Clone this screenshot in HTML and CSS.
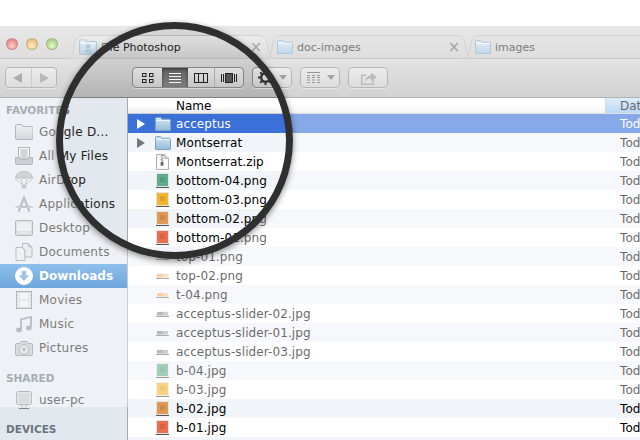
FILE: index.html
```html
<!DOCTYPE html>
<html lang="en">
<head>
<meta charset="utf-8">
<title>Finder</title>
<link rel="stylesheet" href="styles.css">
</head>
<body>
<svg class="defs" width="0" height="0" aria-hidden="true">
  <defs>
    <linearGradient id="fg" x1="0" y1="0" x2="0" y2="1"><stop offset="0" stop-color="#d3e5f3"/><stop offset="1" stop-color="#94bcd9"/></linearGradient>
    <linearGradient id="sg" x1="0" y1="0" x2="0" y2="1"><stop offset="0" stop-color="#e2e4e8"/><stop offset="1" stop-color="#b9bdc4"/></linearGradient>
    <linearGradient id="tabg" x1="0" y1="0" x2="0" y2="1"><stop offset="0" stop-color="#e0e0e0"/><stop offset="1" stop-color="#c6c6c6"/></linearGradient>
    <symbol id="folder" viewBox="0 0 16 14"><path d="M.5 13V1.600C.5 1 1 .5 1.600.5h3.600c.6 0 .9.3 1.200.8l.5.9h7.500c.6 0 1.100.5 1.100 1.100V13c0 .3-.2.5-.5.5H1c-.3 0-.5-.2-.5-.5z" fill="url(#fg)" stroke="#7ba3c0"/><path d="M1 3.500h14" stroke="#eef6fb"/></symbol>
    <symbol id="zip" viewBox="0 0 14 17"><path d="M.5 .5h9l4 4v12H.5z" fill="#fbfbfb" stroke="#a5a5a5"/><path d="M9.500 .5v4h4" fill="#ddd" stroke="#a5a5a5"/><path d="M6 1h2v1H6zM5 2.500h2v1H5zM6 4h2v1H6zM5 5.500h2v1H5zM6 7h2v1H6z" fill="#777"/><rect x="5" y="8.500" width="3" height="4" rx=".6" fill="#666"/></symbol>
    <symbol id="thumb" viewBox="0 0 13 15"><rect width="13" height="14" fill="#fff"/><rect x=".5" y=".5" width="12" height="13" fill="currentColor" stroke="#e4e4e4"/><rect x="4" y="4" width="5" height="5" fill="#000" opacity=".1"/><path d="M0 14.500h13" stroke="#555"/></symbol>
    <symbol id="strip" viewBox="0 0 13 6"><rect width="13" height="5" fill="#f4f4f4"/><rect x="1" y="1" width="11" height="3.500" fill="currentColor"/><rect x="7" y="1" width="5" height="3.500" fill="#fff" opacity=".3"/><path d="M0 5.500h13" stroke="#777"/></symbol>
    <symbol id="s-folder" viewBox="0 0 18 16"><path d="M.5 14.500V2c0-.8.5-1.500 1.300-1.500h4.400c.7 0 1 .4 1.300 1l.4 1h8.800c.6 0 1.300.6 1.300 1.300v10.700c0 .6-.4 1-1 1H1.500c-.6 0-1-.4-1-1z" fill="url(#sg)" stroke="#7f858c"/></symbol>
    <symbol id="s-files" viewBox="0 0 18 18"><rect x="3.500" y=".5" width="11" height="10.500" fill="#eceef1" stroke="#7f858c"/><path d="M5.500 3h7M5.500 5h7M5.500 7h7M5.500 9h7" stroke="#7f858c"/><path d="M.5 10.500h4l1 2h7l1-2h4v6c0 .6-.4 1-1 1h-15c-.6 0-1-.4-1-1z" fill="#a9aeb5" stroke="#7f858c"/></symbol>
    <symbol id="s-air" viewBox="0 0 18 18"><path d="M.5 7.500C1 3 4.500.5 9 .5s8 2.500 8.500 7c-1-1-2.500-1-3.500 0-1-1-3-1-5 0-2-1-4-1-5 0-1-1-2.500-1-3.500 0z" fill="#b4b8be" stroke="#8a9096"/><path d="M1 8l6.500 6M17 8l-6.500 6M6 8l1.800 6M12 8l-1.800 6" stroke="#8a9096" stroke-width=".8"/><rect x="6.800" y="14" width="4.400" height="3.500" fill="#a0a5ab"/></symbol>
    <symbol id="s-apps" viewBox="0 0 20 18"><path d="M10.500 .5L4 17.500M9.500 .5L16 17.500M3.500 12h13" stroke="#8d9298" stroke-width="2.200" fill="none"/><path d="M.5 12.500h6M13.500 12.500h6" stroke="#aab0b6" stroke-width="2"/></symbol>
    <symbol id="s-desk" viewBox="0 0 18 16"><rect x=".5" y=".5" width="17" height="15" rx="1" fill="#c6c9cf" stroke="#84898f"/><rect x="2" y="2" width="14" height="9" fill="#e4e6ea"/><path d="M5 12.500h1M7.500 12.500h1M10 12.500h1M12.500 12.500h1" stroke="#fff"/></symbol>
    <symbol id="s-docs" viewBox="0 0 17 18"><path d="M.5 4.500h6l3 3v10h-9z" fill="#e6e8ec" stroke="#8b9096"/><path d="M7 .5h6l3.500 3.500v10h-7V7L7 5z" fill="#dfe2e6" stroke="#8b9096"/><path d="M13 .5v3.500h3.500" fill="none" stroke="#8b9096"/></symbol>
    <symbol id="s-down" viewBox="0 0 18 18"><circle cx="9" cy="9" r="9" fill="#fff"/><path d="M6.800 4h4.400v4.500h3L9 14 3.800 8.500h3z" fill="#5b9bdb"/></symbol>
    <symbol id="s-movie" viewBox="0 0 16 18"><rect x=".5" y=".5" width="15" height="17" fill="#c7cad0" stroke="#84898f"/><rect x="3.500" y="2" width="9" height="6.500" fill="#eceef1"/><rect x="3.500" y="9.500" width="9" height="6.500" fill="#eceef1"/><path d="M2 2v14M14 2v14" stroke="#f2f3f5" stroke-width="1.500" stroke-dasharray="1.500 1.500"/></symbol>
    <symbol id="s-music" viewBox="0 0 16 17"><path d="M5 13V3.500L15 1v10" fill="none" stroke="#8b9096" stroke-width="1.800"/><ellipse cx="3" cy="14" rx="2.800" ry="2.400" fill="#8b9096"/><ellipse cx="12.800" cy="12" rx="2.800" ry="2.400" fill="#8b9096"/></symbol>
    <symbol id="s-cam" viewBox="0 0 18 15"><path d="M.5 4c0-.8.5-1.500 1.300-1.500h3L6 .5h6l1.200 2h3c.8 0 1.300.7 1.300 1.500v9.500c0 .6-.4 1-1 1h-15c-.6 0-1-.4-1-1z" fill="#bcc0c6" stroke="#84898f"/><circle cx="9" cy="8.500" r="4.500" fill="#e8eaed" stroke="#84898f"/><circle cx="9" cy="8.500" r="2.200" fill="#a0a5ab"/></symbol>
    <symbol id="s-pc" viewBox="0 0 16 18"><rect x=".5" y=".5" width="15" height="13" rx="2" fill="#d8dade" stroke="#84898f"/><path d="M2.500 3h11M2.500 5h11M2.500 7h11M2.500 9h11M2.500 11h11" stroke="#a5a9af"/><path d="M6 14v2M10 14v2M3 17.500h10" stroke="#84898f"/></symbol>
  </defs>
</svg>

<div class="window">
  <header class="tabbar">
    <div class="lights">
      <span class="light red"></span><span class="light amber"></span><span class="light green"></span>
    </div>
    <div class="tab active">
      <svg class="tab-shape" viewBox="0 0 210 24" width="210" height="24"><path d="M0 23.500C5 23.500 7 20 8 13 9 5 11 .5 18 .5H192C199 .5 201 5 202 13 203 20 205 23.500 210 23.500" fill="url(#tabg)" stroke="#b4b4b4"/></svg>
      <svg class="tab-icon" width="18" height="16" viewBox="0 0 16 14"><use href="#folder"/><circle cx="8" cy="6.500" r="2" fill="#7ba3c0"/><path d="M4.500 12c0-2.500 1.500-3 3.500-3s3.500.5 3.500 3z" fill="#7ba3c0"/></svg>
      <span class="tab-label">File Photoshop</span><span class="tab-x">×</span>
    </div>
    <div class="tab">
      <svg class="tab-shape" viewBox="0 0 210 24" width="210" height="24"><path d="M0 23.500C5 23.500 7 20 8 13 9 5 11 .5 18 .5H192C199 .5 201 5 202 13 203 20 205 23.500 210 23.500" fill="none" stroke="#b4b4b4"/></svg>
      <svg class="tab-icon" width="16" height="14"><use href="#folder"/></svg>
      <span class="tab-label">doc-images</span><span class="tab-x">×</span>
    </div>
    <div class="tab">
      <svg class="tab-shape" viewBox="0 0 210 24" width="210" height="24"><path d="M0 23.500C5 23.500 7 20 8 13 9 5 11 .5 18 .5H192C199 .5 201 5 202 13 203 20 205 23.500 210 23.500" fill="none" stroke="#b4b4b4"/></svg>
      <svg class="tab-icon" width="16" height="14"><use href="#folder"/></svg>
      <span class="tab-label">images</span>
    </div>
  </header>

  <nav class="toolbar">
    <div class="seg nav-seg">
      <span class="seg-item"><svg width="12" height="12" viewBox="0 0 12 12"><path d="M10 1v10L1 6z" fill="#777"/></svg></span>
      <span class="seg-item"><svg width="12" height="12" viewBox="0 0 12 12"><path d="M2 1v10l9-5z" fill="#8a8a8a"/></svg></span>
    </div>
    <div class="seg view-seg">
      <span class="seg-item"><svg width="14" height="12" viewBox="0 0 14 12" fill="none" stroke="#222"><rect x="1.500" y="1.500" width="3.500" height="3"/><rect x="8.500" y="1.500" width="3.500" height="3"/><rect x="1.500" y="7.500" width="3.500" height="3"/><rect x="8.500" y="7.500" width="3.500" height="3"/></svg></span>
      <span class="seg-item on"><svg width="14" height="12" viewBox="0 0 14 12" fill="none" stroke="#f4f4f4"><path d="M1 1.500h12M1 4.500h12M1 7.500h12M1 10.500h12"/></svg></span>
      <span class="seg-item"><svg width="14" height="12" viewBox="0 0 14 12" fill="none" stroke="#222"><rect x=".5" y="1.500" width="13" height="9"/><path d="M4.500 1.500v9M9.500 1.500v9"/></svg></span>
      <span class="seg-item"><svg width="16" height="12" viewBox="0 0 16 12" fill="none" stroke="#222"><path d="M.5 2v8M2.500 2v8M13.500 2v8M15.500 2v8"/><rect x="4.500" y="1.500" width="7" height="9" fill="#555"/></svg></span>
    </div>
    <div class="seg action-seg">
      <span class="seg-item"><svg width="15" height="15" viewBox="0 0 15 15"><circle cx="7.500" cy="7.500" r="4.300" fill="none" stroke="#333" stroke-width="2.400"/><path d="M7.500 0v3M7.500 12v3M0 7.500h3M12 7.500h3M2.200 2.200l2 2M10.800 10.800l2 2M2.200 12.800l2-2M10.800 4.200l2-2" stroke="#333" stroke-width="2"/></svg><svg class="caret" width="8" height="5" viewBox="0 0 8 5"><path d="M0 0h8L4 5z" fill="#666"/></svg></span>
    </div>
    <div class="seg arrange-seg">
      <span class="seg-item"><svg width="15" height="12" viewBox="0 0 15 12" fill="none" stroke="#555"><path d="M1 .5h13M1 3.500h3M6 3.500h3M11 3.500h3M1 5.500h3M6 5.500h3M11 5.500h3M1 8h3M6 8h3M11 8h3M1 10.500h3M6 10.500h3M11 10.500h3"/></svg><svg class="caret" width="8" height="5" viewBox="0 0 8 5"><path d="M0 0h8L4 5z" fill="#666"/></svg></span>
    </div>
    <div class="seg share-seg">
      <span class="seg-item"><svg width="17" height="14" viewBox="0 0 17 14"><path d="M1 3.500h5v1.500H2.500v7.500h10V9H14v5H1z" fill="#8f8f8f"/><path d="M5 10C5.500 6.500 8 4.500 11 4.500V1.500l6 4.500-6 4.500V7.500C8.500 7.500 6.500 8.300 5 10z" fill="#8f8f8f"/></svg></span>
    </div>
  </nav>

  <main class="body">
    <aside class="sidebar">
      <h2 class="side-head first">FAVORITES</h2>
      <div class="side-item"><svg class="si" height="16"><use href="#s-folder"/></svg>Google D...</div>
      <div class="side-item"><svg class="si" height="18"><use href="#s-files"/></svg>All My Files</div>
      <div class="side-item"><svg class="si" height="18"><use href="#s-air"/></svg>AirDrop</div>
      <div class="side-item"><svg class="si" height="18"><use href="#s-apps"/></svg>Applications</div>
      <div class="side-item"><svg class="si" height="16"><use href="#s-desk"/></svg>Desktop</div>
      <div class="side-item"><svg class="si" height="18"><use href="#s-docs"/></svg>Documents</div>
      <div class="side-item current"><svg class="si" height="18"><use href="#s-down"/></svg>Downloads</div>
      <div class="side-item"><svg class="si" height="18"><use href="#s-movie"/></svg>Movies</div>
      <div class="side-item"><svg class="si" height="17"><use href="#s-music"/></svg>Music</div>
      <div class="side-item"><svg class="si" height="15"><use href="#s-cam"/></svg>Pictures</div>
      <h2 class="side-head">SHARED</h2>
      <div class="side-item tight"><svg class="si" height="18"><use href="#s-pc"/></svg>user-pc</div>
      <h2 class="side-head last">DEVICES</h2>
    </aside>

    <section class="list">
      <div class="list-head"><span class="col-name">Name</span><span class="col-date">Dat</span></div>

      <div class="row selected"><span class="disc"><svg width="10" height="10" viewBox="0 0 10 10"><path d="M1 0l8 5-8 5z" fill="#fff"/></svg></span><svg class="fi" width="16" height="14"><use href="#folder"/></svg><span class="name">acceptus</span><span class="date">Tod</span></div>
      <div class="row"><span class="disc"><svg width="10" height="10" viewBox="0 0 10 10"><path d="M1 0l8 5-8 5z" fill="#777"/></svg></span><svg class="fi" width="16" height="14"><use href="#folder"/></svg><span class="name">Montserrat</span><span class="date">Tod</span></div>
      <div class="row"><span class="disc"></span><svg class="fi sm" width="13" height="16"><use href="#zip"/></svg><span class="name">Montserrat.zip</span><span class="date">Tod</span></div>
      <div class="row"><span class="disc"></span><svg class="fi sm c-green" width="13" height="15"><use href="#thumb"/></svg><span class="name">bottom-04.png</span><span class="date">Tod</span></div>
      <div class="row"><span class="disc"></span><svg class="fi sm c-yellow" width="13" height="15"><use href="#thumb"/></svg><span class="name">bottom-03.png</span><span class="date">Tod</span></div>
      <div class="row"><span class="disc"></span><svg class="fi sm c-orange" width="13" height="15"><use href="#thumb"/></svg><span class="name">bottom-02.png</span><span class="date">Tod</span></div>
      <div class="row"><span class="disc"></span><svg class="fi sm c-red" width="13" height="15"><use href="#thumb"/></svg><span class="name">bottom-01.png</span><span class="date">Tod</span></div>
      <div class="row"><span class="disc"></span><svg class="fi sm c-peach" width="13" height="6"><use href="#strip"/></svg><span class="name">top-01.png</span><span class="date">Tod</span></div>
      <div class="row"><span class="disc"></span><svg class="fi sm c-peach" width="13" height="6"><use href="#strip"/></svg><span class="name">top-02.png</span><span class="date">Tod</span></div>
      <div class="row"><span class="disc"></span><svg class="fi sm c-peach" width="13" height="6"><use href="#strip"/></svg><span class="name">t-04.png</span><span class="date">Tod</span></div>
      <div class="row"><span class="disc"></span><svg class="fi sm c-grey" width="13" height="6"><use href="#strip"/></svg><span class="name">acceptus-slider-02.jpg</span><span class="date">Tod</span></div>
      <div class="row"><span class="disc"></span><svg class="fi sm c-grey" width="13" height="6"><use href="#strip"/></svg><span class="name">acceptus-slider-01.jpg</span><span class="date">Tod</span></div>
      <div class="row"><span class="disc"></span><svg class="fi sm c-grey" width="13" height="6"><use href="#strip"/></svg><span class="name">acceptus-slider-03.jpg</span><span class="date">Tod</span></div>
      <div class="row"><span class="disc"></span><svg class="fi sm c-green" width="13" height="15"><use href="#thumb"/></svg><span class="name">b-04.jpg</span><span class="date">Tod</span></div>
      <div class="row"><span class="disc"></span><svg class="fi sm c-yellow" width="13" height="15"><use href="#thumb"/></svg><span class="name">b-03.jpg</span><span class="date">Tod</span></div>
      <div class="row"><span class="disc"></span><svg class="fi sm c-orange" width="13" height="15"><use href="#thumb"/></svg><span class="name">b-02.jpg</span><span class="date">Tod</span></div>
      <div class="row"><span class="disc"></span><svg class="fi sm c-red" width="13" height="15"><use href="#thumb"/></svg><span class="name">b-01.jpg</span><span class="date">Tod</span></div>
      <div class="row"></div>
    </section>
  </main>
</div>

<div class="veil"><div class="lens"></div></div>
</body>
</html>
```

FILE: styles.css
```css
* { box-sizing: border-box; }
html, body { margin: 0; height: 440px; overflow: hidden; background: #fff; }
body { font-family: "DejaVu Sans", sans-serif; font-size: 12px; color: #000; position: relative; }
.defs { position: absolute; }

.window { display: flex; flex-direction: column; height: 440px; padding-top: 26px; }

/* Tab strip */
.tabbar { display: flex; align-items: flex-end; height: 33px; background: linear-gradient(#d9d9d9, #c8c8c8); border-bottom: 1px solid #a6a6a6; flex: none; }
.lights { width: 66px; align-self: center; display: flex; gap: 8px; padding: 3px 0 0 6px; flex: none; }
.light { width: 12px; height: 12px; border-radius: 50%; border: 1px solid rgba(0,0,0,.3); }
.red { background: radial-gradient(circle at 50% 70%, #ffb0a8, #dc3c3c 70%); }
.amber { background: radial-gradient(circle at 50% 70%, #ffe2a0, #e09a28 70%); }
.green { background: radial-gradient(circle at 50% 70%, #d8f4a8, #74b840 70%); }
.tab { position: relative; width: 198px; height: 24px; margin-bottom: -1px; display: flex; align-items: center; padding-left: 13px; flex: none; color: #222; }
.tab-shape { position: absolute; left: 0; top: 0; }
.tab-icon { position: relative; flex: none; }
.tab-label { position: relative; margin-left: 4px; flex: 1; font-size: 11px; color: #222; }
.tab-x { position: relative; width: 14px; margin-right: 1px; text-align: center; font-size: 15px; color: #666; line-height: 1; }

/* Toolbar */
.toolbar { display: flex; align-items: center; height: 39px; padding: 0 5px 1px; gap: 8px; background: linear-gradient(#d0d0d0, #b4b4b4); border-bottom: 1px solid #808080; flex: none; }
.seg { display: flex; height: 21px; border: 1px solid #868686; border-radius: 4px; background: linear-gradient(#e0e0e0, #c6c6c6); overflow: hidden; box-shadow: 0 1px 0 rgba(255,255,255,.4); }
.seg-item { display: flex; align-items: center; justify-content: center; gap: 6px; flex: 1; }
.nav-seg { width: 52px; margin-right: 67px; }
.nav-seg .seg-item + .seg-item { border-left: 1px solid #aaa; }
.view-seg { width: 112px; }
.view-seg .seg-item:first-child { flex: 30; }
.view-seg .seg-item { flex: 26; }
.view-seg .seg-item:last-child { flex: 29; border-left: 1px solid #aaa; }
.seg-item.on { background: linear-gradient(#5e5e5e, #808080); box-shadow: inset 0 1px 3px rgba(0,0,0,.5); }
.action-seg, .arrange-seg, .share-seg { width: 40px; }
.caret { flex: none; }

/* Body */
.body { display: flex; flex: 1; min-height: 0; }
.sidebar { width: 128px; flex: none; background: #e3e8ee; border-right: 1px solid #a8a8a8; padding-top: 5px; overflow: hidden; }
.side-head { margin: 11px 0 0; font-size: 10.500px; font-weight: bold; color: #6a7580; height: 15px; line-height: 15px; padding-left: 6px; }
.side-head.first { margin: 0 0 2px; }
.side-head.last { margin-top: 10px; }
.side-item { display: flex; align-items: center; height: 24px; font-size: 12px; letter-spacing: .25px; color: #222; white-space: nowrap; }
.side-item.tight { margin-top: 2px; }
.si { flex: none; width: 18px; margin: 0 6px 0 15px; }
.side-item.current { color: #fff; font-weight: bold; letter-spacing: 0; background: linear-gradient(#4496df, #0f6bc5); }

/* List */
.list { flex: 1; min-width: 0; background: #fff; overflow: hidden; }
.list-head { display: flex; height: 16px; line-height: 16px; background: linear-gradient(#fff 50%, #ececec); border-bottom: 1px solid #ccc; }
.col-name { width: 477px; flex: none; padding-left: 48px; }
.col-date { width: 35px; flex: none; padding-left: 14px; background: linear-gradient(#c8e0f8, #8dbdf0); border-left: 1px solid #b0c0d0; }
.row { display: flex; align-items: center; height: 19px; letter-spacing: .1px; }
.row:nth-of-type(even) { background: #fff; }
.row:nth-of-type(odd) { background: #f1f4f9; }
.row.selected { background: #3a70d8; color: #fff; }
.disc { width: 27px; flex: none; display: flex; padding-left: 8px; }
.fi { flex: none; margin-right: 5px; }
.fi.sm { margin-left: 1px; margin-right: 7px; }
.name { width: 444px; flex: none; white-space: nowrap; }
.date { white-space: nowrap; }
.c-green { color: #5fae8b; }
.c-yellow { color: #f1b52e; }
.c-orange { color: #de9a55; }
.c-red { color: #ec6e50; }
.c-peach { color: #f0b070; }
.c-grey { color: #8a8a8a; }

/* Magnifier: everything outside the lens is washed out */
.veil { position: absolute; inset: 0; overflow: hidden; pointer-events: none; clip-path: polygon(0 0, 640px 0, 640px 399px, 128px 399px, 128px 407px, 0 407px); }
.lens { position: absolute; left: 56px; top: 22px; width: 237px; height: 237px; border-radius: 50%; border: 7px solid #2f2f2f; box-shadow: 0 2px 6px rgba(0,0,0,.45), 0 0 0 700px rgba(255,255,255,.4); }
```
